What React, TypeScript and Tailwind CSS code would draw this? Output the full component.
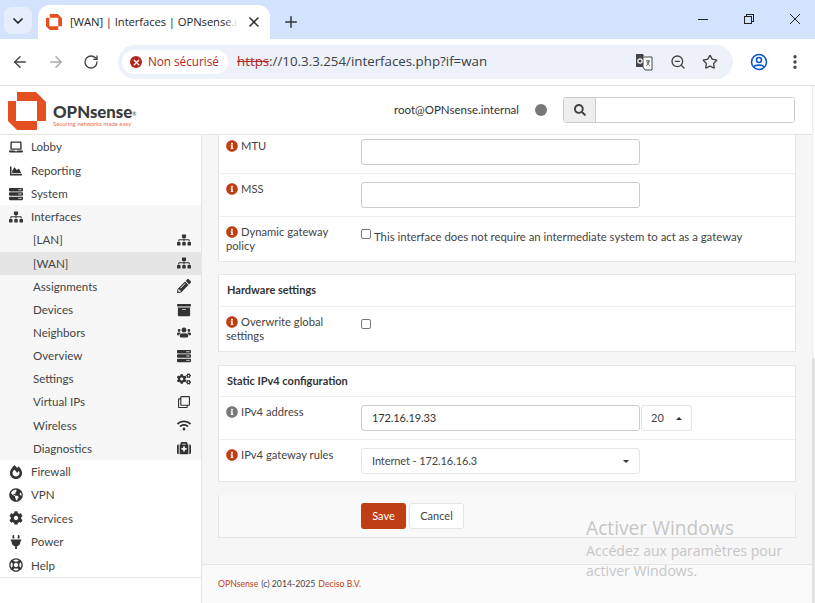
import type { ReactNode } from "react";
import {
  FaArchive,
  FaChartArea,
  FaCog,
  FaCogs,
  FaFireAlt,
  FaGlobeAmericas,
  FaInfoCircle,
  FaLaptop,
  FaMedkit,
  FaPencilAlt,
  FaPlug,
  FaRegClone,
  FaRegLifeRing,
  FaSearch,
  FaServer,
  FaSitemap,
  FaUsers,
  FaWifi,
} from "react-icons/fa";
import { ArrowLeft, ArrowRight, ChevronDown, EllipsisVertical, Plus, RotateCw, Star, X, ZoomOut } from "lucide-react";

const ui = "font-['Open_Sans','Noto_Sans',sans-serif]";
const page = "font-['Lato','Noto_Sans',sans-serif]";

function Logo({ size = 38, className = "" }: { size?: number; className?: string }) {
  return (
    <svg width={size} height={size} viewBox="0 0 38 38" className={`shrink-0 ${className}`}>
      <path d="M9 0H28L38 10V29H29V9H9Z" fill="#e4501f" />
      <path d="M0 9H8V29H29V38H9L0 29Z" fill="#e4501f" />
    </svg>
  );
}

function ChromeBar() {
  return (
    <div className={`${ui} shrink-0`}>
      {/* Tab strip */}
      <div className="h-[39px] bg-[#d3e3fd] flex items-end pl-1 text-[#1f1f1f]">
        <div className="h-[27px] w-[28px] mb-[5px] rounded-lg bg-[#e6eefb] flex items-center justify-center">
          <ChevronDown className="w-4 h-4" strokeWidth={2.5} />
        </div>
        <div className="ml-[6px] h-[34px] w-[232px] bg-white rounded-t-xl flex items-center pl-[8px] pr-[8px]">
          <Logo size={16} />
          <div className="relative ml-[8px] w-[169px] overflow-hidden">
            <span className="block whitespace-nowrap text-[11.3px] tracking-[-0.1px]">[WAN] | Interfaces | OPNsense.internal</span>
            <div className="absolute right-0 top-0 bottom-0 w-[14px] bg-gradient-to-r from-transparent to-white" />
          </div>
          <X className="ml-[8px] w-4 h-4 text-[#333]" strokeWidth={2.5} />
        </div>
        <Plus className="ml-[12px] mb-[8px] w-[18px] h-[18px] text-[#333]" strokeWidth={2} />
        <div className="flex-1" />
        <div className="flex items-center gap-[36px] pr-[15px] mb-[15px] text-[#222]">
          <div className="w-[10px] h-px bg-[#222]" />
          <div className="relative w-[10px] h-[10px]">
            <div className="absolute left-[2px] top-0 w-[8px] h-[8px] border border-[#222]" />
            <div className="absolute left-0 top-[2px] w-[8px] h-[8px] border border-[#222] bg-[#d3e3fd]" />
          </div>
          <svg width="10" height="10" viewBox="0 0 10 10" stroke="#222" strokeWidth="1">
            <path d="M0 0L10 10M10 0L0 10" />
          </svg>
        </div>
      </div>
      {/* Toolbar */}
      <div className="h-[47px] bg-white border-b border-[#dedede] flex items-center pl-[11px] pr-[10px] text-[#444]">
        <ArrowLeft className="w-[18px] h-[18px]" strokeWidth={2} />
        <ArrowRight className="ml-[18px] w-[18px] h-[18px] text-[#aaa]" strokeWidth={2} />
        <RotateCw className="ml-[18px] w-4 h-4" strokeWidth={2} />
        <div className="ml-[19px] h-[34px] w-[615px] rounded-full bg-[#edf2fa] flex items-center pl-[4px] pr-[15px]">
          <div className="h-[24px] w-[106px] bg-white rounded-full flex items-center pl-[8px] text-[11.7px] text-[#b3261e]">
            <span className="w-[12px] h-[12px] rounded-full bg-[#b3261e] flex items-center justify-center">
              <X className="w-[9px] h-[9px] text-white" strokeWidth={3.5} />
            </span>
            <span className="ml-[6px] whitespace-nowrap">Non sécurisé</span>
          </div>
          <div className="ml-[9px] text-[13.3px] whitespace-nowrap text-[#3c4043]">
            <span className="text-[#b3261e] line-through">https</span>://10.3.3.254/interfaces.php?if=wan
          </div>
          <div className="flex-1" />
          <svg width="18" height="18" viewBox="0 0 18 18">
            <path d="M1 1H8L9 3H8V14H1Z" fill="#444" />
            <path d="M8 4H17V17H10L8 14Z" fill="#fff" stroke="#444" strokeWidth="1" />
            <circle cx="5" cy="8" r="2.2" fill="none" stroke="#fff" strokeWidth="1.2" />
            <path d="M11 8H15M13 7V8M14 8C14 11 12 12 11 13M12 9C12.500 11 14 12 15 13" fill="none" stroke="#444" strokeWidth="0.9" />
          </svg>
          <ZoomOut className="ml-[17px] w-4 h-4" strokeWidth={2} />
          <Star className="ml-[16px] w-4 h-4" strokeWidth={2} />
        </div>
        <svg className="ml-[17px]" width="18" height="18" viewBox="0 0 18 18" fill="none" stroke="#0b57d0" strokeWidth="1.6">
          <circle cx="9" cy="9" r="7.500" />
          <circle cx="9" cy="7" r="2.500" />
          <path d="M4 14C5 11.500 13 11.500 14 14" />
        </svg>
        <EllipsisVertical className="ml-[18px] w-[18px] h-[18px]" strokeWidth={2.5} />
      </div>
    </div>
  );
}

function PageHeader() {
  return (
    <header className="h-[49px] shrink-0 bg-white border-b border-[#e5e5e5] flex items-center pl-[8px] pr-[17px]">
      <Logo className="mt-[1px]" />
      <div className="ml-[7px] mt-[11px] flex flex-col">
        <span className="text-[16.8px] leading-[16px] font-black text-[#3a3a3a] whitespace-nowrap">
          OPNsense<sup className="text-[5px] font-normal">®</sup>
        </span>
        <span className="mt-[1px] text-[6px] leading-[6px] text-[#e8704a] whitespace-nowrap">Securing networks made easy</span>
      </div>
      <div className="flex-1" />
      <span className="text-[11.5px] text-[#333]">root@OPNsense.internal</span>
      <span className="ml-[16px] w-3 h-3 rounded-full bg-[#777]" />
      <div className="ml-[16px] h-[26px] w-[232px] flex rounded-[3px] border border-[#ccc]">
        <div className="w-[32px] bg-[#eee] border-r border-[#ccc] flex items-center justify-center">
          <FaSearch className="w-[12px] h-[12px] text-[#444]" />
        </div>
        <div className="flex-1 bg-white" />
      </div>
    </header>
  );
}

const topItems = [
  { label: "Reporting", icon: <FaChartArea className="text-[12px]" /> },
  { label: "System", icon: <FaServer /> },
];

const subItems = [
  { label: "[LAN]", icon: <FaSitemap /> },
  { label: "[WAN]", icon: <FaSitemap />, active: true },
  { label: "Assignments", icon: <FaPencilAlt /> },
  { label: "Devices", icon: <FaArchive /> },
  { label: "Neighbors", icon: <FaUsers className="text-[15px]" /> },
  { label: "Overview", icon: <FaServer /> },
  { label: "Settings", icon: <FaCogs /> },
  { label: "Virtual IPs", icon: <FaRegClone className="text-[12px]" /> },
  { label: "Wireless", icon: <FaWifi className="text-[15px]" /> },
  { label: "Diagnostics", icon: <FaMedkit /> },
];

const bottomItems = [
  { label: "Firewall", icon: <FaFireAlt /> },
  { label: "VPN", icon: <FaGlobeAmericas /> },
  { label: "Services", icon: <FaCog /> },
  { label: "Power", icon: <FaPlug /> },
  { label: "Help", icon: <FaRegLifeRing /> },
];

function MenuRow({ label, icon, className = "" }: { label: string; icon: ReactNode; className?: string }) {
  return (
    <div className={`h-[23.15px] flex items-center pl-[8px] ${className}`}>
      <span className="w-[15px] flex justify-center text-[14px] text-[#333]">{icon}</span>
      <span className="ml-[8px]">{label}</span>
    </div>
  );
}

function Sidebar() {
  return (
    <aside className="w-[202px] shrink-0 bg-white border-r border-[#e5e5e5] text-[11.6px] text-[#444] flex flex-col">
      <MenuRow label="Lobby" icon={<FaLaptop />} className="!h-[24.2px]" />
      {topItems.map((i) => (
        <MenuRow key={i.label} {...i} />
      ))}
      <div className="bg-[#f7f7f7]">
        <MenuRow label="Interfaces" icon={<FaSitemap />} />
        {subItems.map((i) => (
          <div
            key={i.label}
            className={`h-[23.15px] flex items-center pl-[33px] pr-[10px] ${i.active ? "bg-[#e5e5e5]" : ""}`}
          >
            <span className="flex-1">{i.label}</span>
            <span className="w-[14px] flex justify-center text-[14px] text-[#333]">{i.icon}</span>
          </div>
        ))}
      </div>
      <div className="border-b border-[#e5e5e5]">
        {bottomItems.map((i) => (
          <MenuRow key={i.label} {...i} className="!h-[23.4px]" />
        ))}
      </div>
    </aside>
  );
}

function InfoLabel({ children, muted = false }: { children: ReactNode; muted?: boolean }) {
  return (
    <div className="w-[135px] pr-[20px] text-[11.2px] leading-[14px] text-[#444]">
      <FaInfoCircle className={`inline-block w-[12px] h-[12px] mr-[3px] align-[-2px] ${muted ? "text-[#777]" : "text-[#c03e14]"}`} />
      {children}
    </div>
  );
}

function TextBox({ value = "" }: { value?: string }) {
  return (
    <div className="h-[26px] w-[279px] bg-white border border-[#ccc] rounded-[3px] flex items-center pl-[10px] text-[11px] tracking-[-0.1px] text-[#333]">
      {value}
    </div>
  );
}

function Checkbox() {
  return <span className="block w-[10px] h-[10px] shrink-0 rounded-[2px] border border-[#777] bg-white" />;
}

function Row({ label, children, className = "", muted = false }: { label: ReactNode; children: ReactNode; className?: string; muted?: boolean }) {
  return (
    <div className={`flex pl-[7px] ${className}`}>
      <InfoLabel muted={muted}>{label}</InfoLabel>
      <div className="flex-1 flex">{children}</div>
    </div>
  );
}

function Content() {
  return (
    <main className="flex-1 min-w-0 flex flex-col bg-[#f6f6f6]">
      <div className="flex-1 pl-[16px] pr-[16px] text-[#444]">
        <section className="bg-white border-b border-x border-[#e5e5e5]">
          <Row label="MTU" className="h-[39px] border-b border-[#eee] pt-[4px]">
            <TextBox />
          </Row>
          <Row label="MSS" className="h-[43px] border-b border-[#eee] pt-[8px]">
            <TextBox />
          </Row>
          <Row label="Dynamic gateway policy" className="h-[44px] pt-[8px]">
            <div className="pt-[3px] flex items-start text-[11.35px] leading-[14px] whitespace-nowrap">
              <span className="mt-[1px]"><Checkbox /></span>
              <span className="ml-[3px] mt-[2px]">This interface does not require an intermediate system to act as a gateway</span>
            </div>
          </Row>
        </section>

        <section className="mt-[12px] bg-white border border-[#e5e5e5]">
          <div className="h-[32px] border-b border-[#eee] pl-[8px] flex items-center text-[11px] font-bold text-[#333]">Hardware settings</div>
          <Row label="Overwrite global settings" className="h-[44px] pt-[8px]">
            <div className="pt-[4px]"><Checkbox /></div>
          </Row>
        </section>

        <section className="mt-[13px] bg-white border border-[#e5e5e5]">
          <div className="h-[31px] border-b border-[#eee] pl-[8px] flex items-center text-[11px] font-bold text-[#333]">Static IPv4 configuration</div>
          <Row label="IPv4 address" muted className="h-[43px] border-b border-[#eee] pt-[8px]">
            <TextBox value="172.16.19.33" />
            <div className="ml-[1px] h-[26px] w-[51px] border border-[#e5e5e5] rounded-[3px] flex items-center pl-[9px] text-[11px]">
              20
              <span className="ml-[12px] w-0 h-0 border-x-[3px] border-x-transparent border-b-[3px] border-b-[#333]" />
            </div>
          </Row>
          <Row label="IPv4 gateway rules" className="h-[41px] pt-[8px]">
            <div className="h-[26px] w-[279px] border border-[#e5e5e5] rounded-[3px] flex items-center justify-between px-[10px] text-[11px] tracking-[-0.1px]">
              Internet - 172.16.16.3
              <span className="w-0 h-0 border-x-[3px] border-x-transparent border-t-[3px] border-t-[#333]" />
            </div>
          </Row>
        </section>

        <section className="mt-[13px] h-[43px] bg-[#f9f9f9] border-x border-b border-[#e5e5e5] flex items-center pl-[142px]">
          <button className="h-[26px] w-[45px] rounded-[3px] bg-[#c03e14] text-white text-[11px]">Save</button>
          <button className="ml-[3px] h-[26px] w-[55px] rounded-[3px] bg-white border border-[#e5e5e5] text-[11px]">Cancel</button>
        </section>
      </div>

      <footer className="h-[39px] shrink-0 bg-[#fafafa] border-t border-[#e5e5e5] flex items-center pl-[16px] text-[8.7px] text-[#444]">
        <span className="text-[#c03e14]">OPNsense</span>
        <span className="ml-[3px]">(c) 2014-2025</span>
        <span className="ml-[3px] text-[#c03e14]">Deciso B.V.</span>
      </footer>
    </main>
  );
}

export default function App() {
  return (
    <div className={`${page} relative w-[815px] h-[603px] overflow-hidden bg-white flex flex-col`}>
      <ChromeBar />
      <div className="flex-1 min-h-0 flex">
        <div className="flex-1 min-w-0 flex flex-col">
          <PageHeader />
          <div className="flex-1 min-h-0 flex">
            <Sidebar />
            <Content />
          </div>
        </div>
        {/* Scrollbar track */}
        <div className="w-[3px] shrink-0 bg-[#fbfbfb] border-l border-[#eee]" />
      </div>

      {/* Windows activation watermark */}
      <div className={`${ui} absolute left-[586px] top-[517px] text-[#c6c6c6] pointer-events-none`}>
        <div className="text-[19.2px] leading-[22px]">Activer Windows</div>
        <div className="mt-[2px] text-[14.1px] leading-[20px]">
          Accédez aux paramètres pour
          <br />
          activer Windows.
        </div>
      </div>

      {/* Scrollbar thumb */}
      <div className="absolute right-0 top-[358px] bottom-0 w-[3px] bg-[#e2e2e2]" />
    </div>
  );
}
